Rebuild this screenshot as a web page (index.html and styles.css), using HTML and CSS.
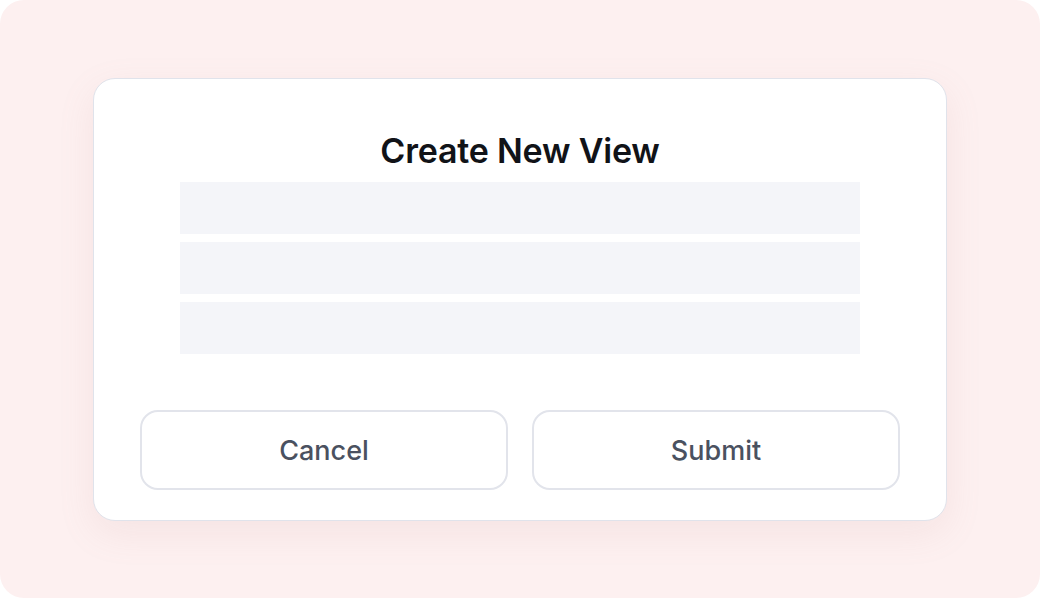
FILE: index.html
```html
<!DOCTYPE html>
<html>
<head>
<meta charset="utf-8">
<link rel="stylesheet" href="styles.css">
</head>
<body>
<div class="stage">
  <div class="card">
    <h1 class="title">Create New View</h1>
    <div class="rows">
      <div class="row"></div>
      <div class="row"></div>
      <div class="row"></div>
    </div>
    <div class="actions">
      <button class="btn">Cancel</button>
      <button class="btn">Submit</button>
    </div>
  </div>
</div>
</body>
</html>
```
FILE: styles.css
```css
html, body {
  margin: 0;
  padding: 0;
  background: #ffffff;
}
.stage {
  width: 1040px;
  height: 598px;
  box-sizing: border-box;
  background: #fdf0f0;
  border-radius: 24px;
  padding: 78px 93px 0 93px;
  font-family: Inter, "Noto Sans", sans-serif;
}
.card {
  box-sizing: border-box;
  width: 854px;
  height: 443px;
  background: #ffffff;
  border: 1.5px solid #e0e3eb;
  border-radius: 22px;
  box-shadow: 0 12px 36px rgba(190, 140, 140, 0.12);
  padding: 51px 46px 30px 46px;
  display: flex;
  flex-direction: column;
}
.title {
  margin: 0;
  text-align: center;
  font-size: 34px;
  line-height: 42px;
  font-weight: 600;
  color: #111318;
  letter-spacing: -0.2px;
}
.rows {
  margin: 10px auto 0 auto;
  width: 680px;
  display: flex;
  flex-direction: column;
  gap: 8px;
}
.row {
  height: 52px;
  background: #f4f5f9;
}
.actions {
  margin-top: 56px;
  display: flex;
  gap: 24px;
}
.btn {
  flex: 1;
  height: 80px;
  background: #ffffff;
  border: 2px solid #e2e4eb;
  border-radius: 18px;
  font-family: Inter, "Noto Sans", sans-serif;
  font-size: 27px;
  font-weight: 500;
  color: #4a5160;
}
```
